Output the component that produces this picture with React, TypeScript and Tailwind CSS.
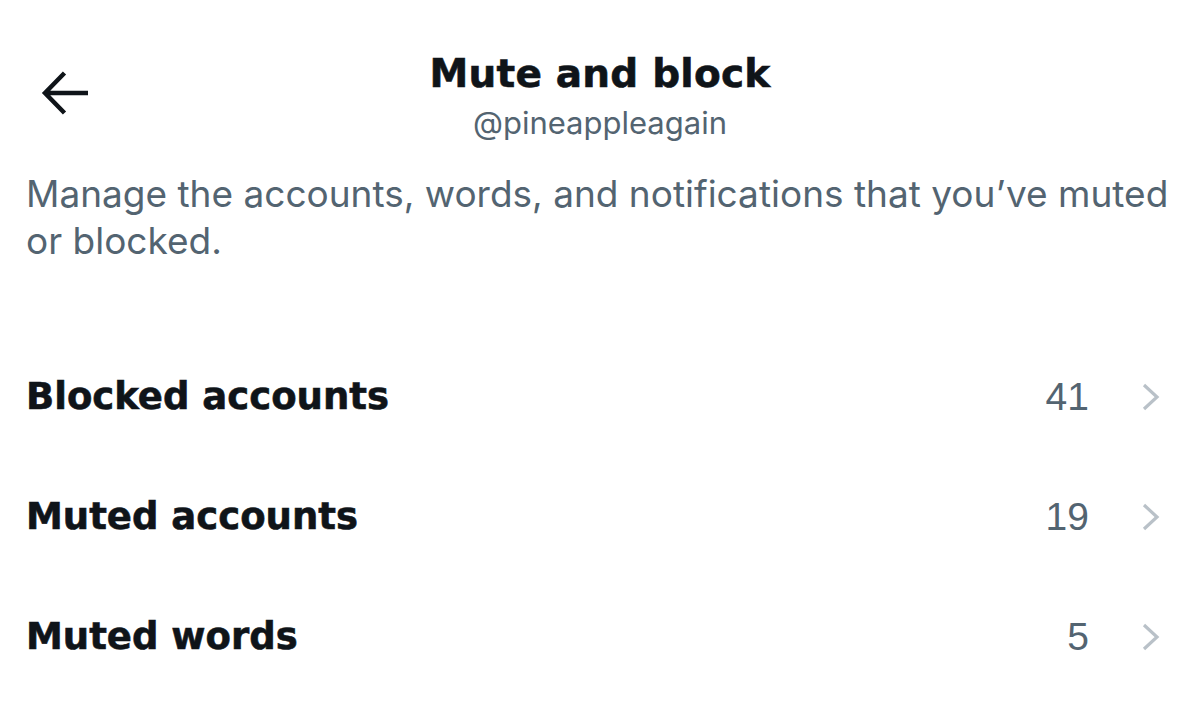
import React from 'react'

const rows = [
  { label: 'Blocked accounts', count: 41 },
  { label: 'Muted accounts', count: 19 },
  { label: 'Muted words', count: 5 },
]

const BackArrow = () => (
  <svg width="48" height="44" viewBox="0 0 48 44" fill="none">
    <path d="M47 22H6M23.5 2L4 22l19.5 20" stroke="#0f1419" strokeWidth="4.5" />
  </svg>
)

const Chevron = () => (
  <svg width="22" height="28" viewBox="0 0 22 28" fill="none">
    <path d="M4 2l13 12L4 26" stroke="#b9c1c8" strokeWidth="3.2" />
  </svg>
)

const App = () => {
  return (
    <div className="w-[1200px] h-[707px] bg-white overflow-hidden font-['Inter',sans-serif] text-[#0f1419]">
      <div className="grid grid-cols-[1fr_auto_1fr] items-start pt-[49px]">
        <div className="pl-[41px] pt-[22px]">
          <BackArrow />
        </div>
        <div className="flex flex-col items-center">
          <div className="font-['DejaVu_Sans',sans-serif] text-[39px] font-bold leading-[50px] tracking-[0.2px] [-webkit-text-stroke:0.6px_#0f1419]">
            Mute and block
          </div>
          <div className="mt-[4px] text-[31px] text-[#536471] leading-[40px]">@pineappleagain</div>
        </div>
        <div />
      </div>
      <div className="pl-[26px] pr-[30px] pt-[27px] text-[37px] leading-[47px] text-[#536471]">
        Manage the accounts, words, and notifications that you’ve muted or blocked.
      </div>
      <div className="pt-[73px]">
        {rows.map((r) => (
          <div key={r.label} className="h-[120px] flex items-center pl-[26px] pr-[38px]">
            <div className="flex-1 font-['DejaVu_Sans',sans-serif] text-[37px] font-bold [-webkit-text-stroke:0.6px_#0f1419]">
              {r.label}
            </div>
            <div className="font-['Liberation_Sans',sans-serif] text-[39px] text-[#536471] mr-[51px]">
              {r.count}
            </div>
            <Chevron />
          </div>
        ))}
      </div>
    </div>
  )
}

export default App
